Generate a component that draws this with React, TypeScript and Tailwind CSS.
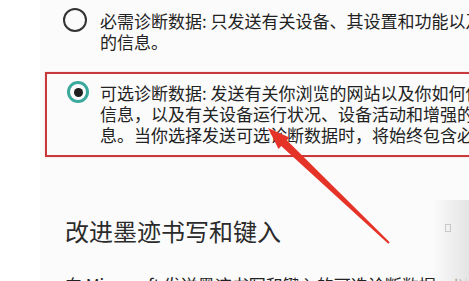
import React from "react";

const font = { fontFamily: '"Noto Sans CJK SC", "Noto Sans", sans-serif' };

export default function App() {
  return (
    <div className="relative flex w-[469px] h-[281px] overflow-hidden bg-white" style={font}>
      {/* left margin strip */}
      <div className="w-[40px] shrink-0 bg-white" />

      {/* settings content */}
      <div className="flex-1 flex flex-col bg-[#fbfbfb] text-[#222] whitespace-nowrap">
        {/* Required option */}
        <div className="flex items-start gap-[13px] pl-[23px] pt-[10px]">
          <span className="mt-[-2px] w-[24px] h-[24px] shrink-0 rounded-full border-2 border-[#333]" />
          <p className="text-[17px] leading-[21px]">
            必需诊断数据: 只发送有关设备、其设置和功能以及是否正常运行
            <br />
            的信息。
          </p>
        </div>

        {/* Optional option (selected, highlighted) */}
        <div className="mt-[20px] ml-[5px] w-[460px] border-2 border-[#c9393b] shadow-[0_0_1px_#e7a3a3]">
          <div className="flex items-start gap-[11px] pl-[20px] pt-[8px] pb-[10px]">
            <span className="mt-[-1px] w-[22px] h-[22px] shrink-0 rounded-full border-[3px] border-[#3aa99c] flex items-center justify-center">
              <span className="w-[9px] h-[9px] rounded-full bg-[#1f1f1f]" />
            </span>
            <p className="text-[17px] leading-[21px]">
              可选诊断数据: 发送有关你浏览的网站以及你如何使用应用和功能的
              <br />
              信息，以及有关设备运行状况、设备活动和增强的错误报告的其他信
              <br />
              息。当你选择发送可选诊断数据时，将始终包含必需诊断数据。
            </p>
          </div>
        </div>

        {/* Inking & typing section */}
        <h2 className="mt-[58px] pl-[25px] text-[24px] leading-[32px] font-normal text-[#2b2b2b]">
          改进墨迹书写和键入
        </h2>
        <p className="mt-[27px] pl-[25px] text-[17px] leading-[21px]">
          向 Microsoft 发送墨迹书写和键入的可选诊断数据，以帮助改进语言识别
        </p>
      </div>

      {/* shading at the right-bottom corner */}
      <div className="absolute left-[432px] top-[200px] w-[37px] h-[81px] bg-gradient-to-r from-transparent to-[#e4e4e4]" />
      <div className="absolute left-[445px] top-[224px] w-[6px] h-[8px] border border-[#c8c8c8]" />

      {/* red pointer arrow */}
      <svg className="absolute inset-0 pointer-events-none" width="469" height="281" viewBox="0 0 469 281">
        <polygon
          points="268,128 289.5,137.4 286.8,140.3 389.7,242.3 388.3,243.7 281.2,146.1 278.5,149"
          fill="#e63328"
        />
      </svg>
    </div>
  );
}
